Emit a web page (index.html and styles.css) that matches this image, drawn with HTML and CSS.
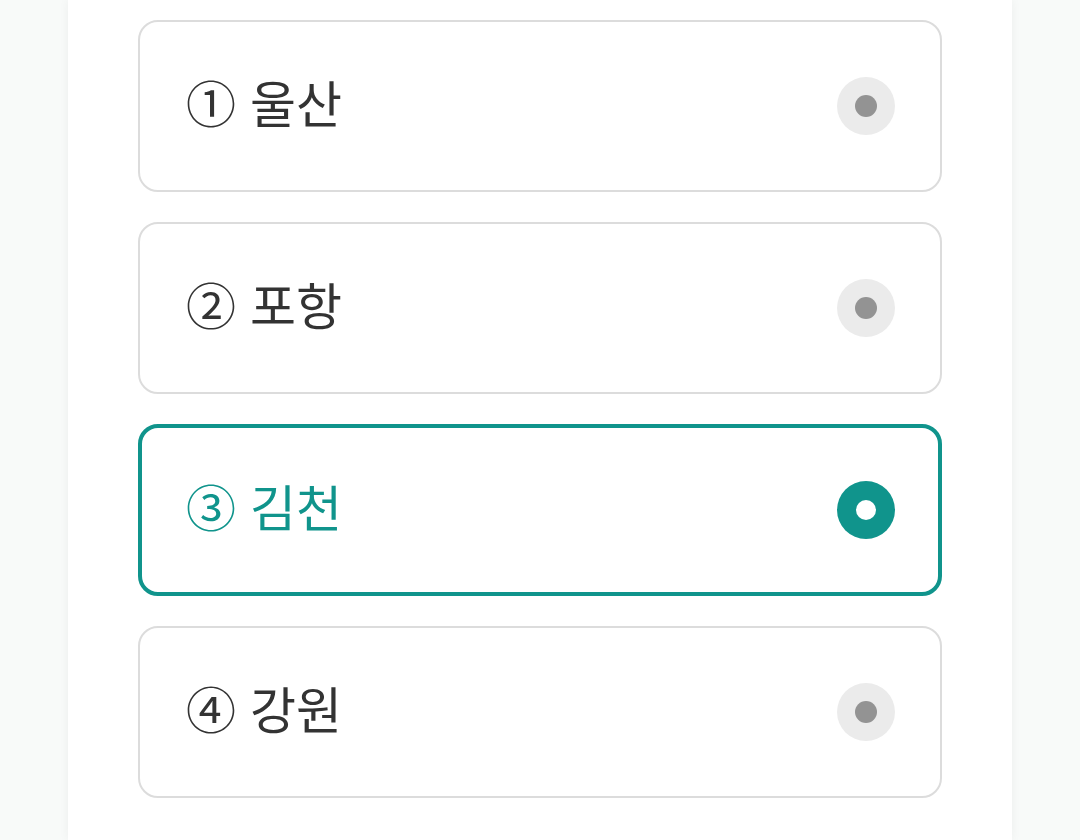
FILE: index.html
```html
<!DOCTYPE html>
<html lang="ko">
<head>
<meta charset="utf-8">
<link rel="stylesheet" href="styles.css">
</head>
<body>
<main class="sheet">
  <ul class="options">
    <li class="option">
      <span class="label">① 울산</span>
      <span class="radio"></span>
    </li>
    <li class="option">
      <span class="label">② 포항</span>
      <span class="radio"></span>
    </li>
    <li class="option selected">
      <span class="label">③ 김천</span>
      <span class="radio"></span>
    </li>
    <li class="option">
      <span class="label">④ 강원</span>
      <span class="radio"></span>
    </li>
  </ul>
</main>
</body>
</html>
```
FILE: styles.css
```css
html, body {
  margin: 0;
  padding: 0;
  height: 100%;
}
body {
  background: #f8faf9;
  font-family: "Noto Sans CJK KR", "Noto Sans", sans-serif;
  overflow: hidden;
}
.sheet {
  width: 944px;
  margin: 0 auto;
  min-height: 100%;
  background: #ffffff;
  box-shadow: 0 0 10px rgba(0, 0, 0, 0.05);
  padding: 20px 70px 0;
  box-sizing: border-box;
}
.options {
  list-style: none;
  margin: 0;
  padding: 0;
  display: flex;
  flex-direction: column;
  gap: 30px;
}
.option {
  box-sizing: border-box;
  height: 172px;
  border: 2px solid #dcdcdc;
  border-radius: 20px;
  display: flex;
  align-items: center;
  justify-content: space-between;
  padding: 0 45px 0 46px;
}
.label {
  font-size: 50px;
  color: #333333;
  line-height: 1;
  padding-bottom: 10px;
}
.radio {
  width: 58px;
  height: 58px;
  border-radius: 50%;
  background: #ebebeb;
  display: flex;
  align-items: center;
  justify-content: center;
}
.radio::after {
  content: "";
  width: 22px;
  height: 22px;
  border-radius: 50%;
  background: #939393;
}
.option.selected {
  border: 4px solid #10948c;
  padding: 0 43px 0 44px;
}
.option.selected .label {
  color: #10948c;
}
.option.selected .radio {
  background: #10948c;
}
.option.selected .radio::after {
  background: #ffffff;
  width: 20px;
  height: 20px;
}
```
